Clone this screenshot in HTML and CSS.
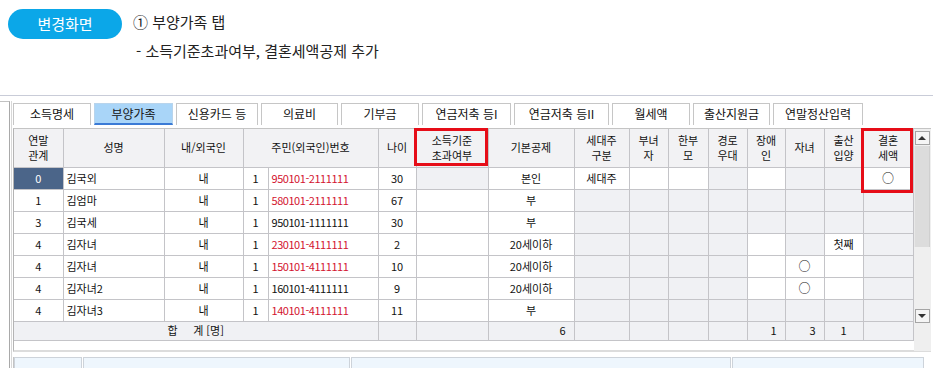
FILE: index.html
```html
<!DOCTYPE html>
<html lang="ko">
<head>
    <meta charset="UTF-8">
    <title>부양가족</title>
    <link rel="stylesheet" href="styles.css">
</head>
<body>
<div class="top">
    <span class="pill">변경화면</span>
    <div class="notes">
        <p class="title">① 부양가족 탭</p>
        <p class="sub">- 소득기준초과여부, 결혼세액공제 추가</p>
    </div>
</div>

<div class="frame">
    <div class="stub"></div>
    <div class="panel">
        <ul class="tabs">
            <li style="width:78px">소득명세</li>
            <li class="on" style="width:79px">부양가족</li>
            <li style="width:82px">신용카드 등</li>
            <li style="width:77px">의료비</li>
            <li style="width:78px">기부금</li>
            <li style="width:89px">연금저축 등I</li>
            <li style="width:95px">연금저축 등II</li>
            <li style="width:78px">월세액</li>
            <li style="width:77px">출산지원금</li>
            <li style="width:90px">연말정산입력</li>
        </ul>

        <div class="gridwrap">
            <table class="grid">
                <colgroup>
                    <col style="width:49px"><col style="width:101px"><col style="width:79px">
                    <col style="width:25px"><col style="width:110px"><col style="width:38px">
                    <col style="width:72px"><col style="width:86px"><col style="width:55px">
                    <col style="width:39px"><col style="width:40px"><col style="width:39px">
                    <col style="width:38px"><col style="width:39px"><col style="width:39px">
                    <col style="width:50px">
                </colgroup>
                <thead>
                <tr>
                    <th>연말<br>관계</th>
                    <th>성명</th>
                    <th>내/외국인</th>
                    <th colspan="2">주민(외국인)번호</th>
                    <th>나이</th>
                    <th>소득기준<br>초과여부</th>
                    <th>기본공제</th>
                    <th>세대주<br>구분</th>
                    <th>부녀<br>자</th>
                    <th>한부<br>모</th>
                    <th>경로<br>우대</th>
                    <th>장애<br>인</th>
                    <th>자녀</th>
                    <th>출산<br>입양</th>
                    <th>결혼<br>세액</th>
                </tr>
                </thead>
                <tbody>
                <tr>
                    <td class="c sel">0</td><td>김국외</td><td class="c">내</td><td class="c">1</td>
                    <td class="num red">950101-2111111</td><td class="c">30</td><td class="g"></td>
                    <td class="c">본인</td><td class="c">세대주</td><td></td><td></td><td class="g"></td>
                    <td></td><td class="g"></td><td class="g"></td><td class="c o">○</td>
                </tr>
                <tr>
                    <td class="c">1</td><td>김엄마</td><td class="c">내</td><td class="c">1</td>
                    <td class="num red">580101-2111111</td><td class="c">67</td><td></td>
                    <td class="c">부</td><td class="g"></td><td class="g"></td><td class="g"></td><td class="g"></td>
                    <td class="g"></td><td class="g"></td><td class="g"></td><td class="g"></td>
                </tr>
                <tr>
                    <td class="c">3</td><td>김국세</td><td class="c">내</td><td class="c">1</td>
                    <td class="num">950101-1111111</td><td class="c">30</td><td></td>
                    <td class="c">부</td><td class="g"></td><td class="g"></td><td class="g"></td><td class="g"></td>
                    <td class="g"></td><td class="g"></td><td class="g"></td><td class="g"></td>
                </tr>
                <tr>
                    <td class="c">4</td><td>김자녀</td><td class="c">내</td><td class="c">1</td>
                    <td class="num red">230101-4111111</td><td class="c">2</td><td></td>
                    <td class="c">20세이하</td><td class="g"></td><td class="g"></td><td class="g"></td><td class="g"></td>
                    <td></td><td class="g"></td><td class="c">첫째</td><td class="g"></td>
                </tr>
                <tr>
                    <td class="c">4</td><td>김자녀</td><td class="c">내</td><td class="c">1</td>
                    <td class="num red">150101-4111111</td><td class="c">10</td><td></td>
                    <td class="c">20세이하</td><td class="g"></td><td class="g"></td><td class="g"></td><td class="g"></td>
                    <td></td><td class="c o">○</td><td></td><td class="g"></td>
                </tr>
                <tr>
                    <td class="c">4</td><td>김자녀2</td><td class="c">내</td><td class="c">1</td>
                    <td class="num">160101-4111111</td><td class="c">9</td><td></td>
                    <td class="c">20세이하</td><td class="g"></td><td class="g"></td><td class="g"></td><td class="g"></td>
                    <td></td><td class="c o">○</td><td></td><td class="g"></td>
                </tr>
                <tr>
                    <td class="c">4</td><td>김자녀3</td><td class="c">내</td><td class="c">1</td>
                    <td class="num red">140101-4111111</td><td class="c">11</td><td></td>
                    <td class="c">부</td><td class="g"></td><td class="g"></td><td class="g"></td><td class="g"></td>
                    <td class="g"></td><td class="g"></td><td class="g"></td><td class="g"></td>
                </tr>
                <tr class="sum">
                    <td colspan="5" class="c">합&nbsp;&nbsp;&nbsp;&nbsp;&nbsp;계 [명]</td>
                    <td></td><td></td><td class="r">6</td><td></td><td></td><td></td><td></td>
                    <td class="r">1</td><td class="r">3</td><td class="c">1</td><td></td>
                </tr>
                </tbody>
            </table>

            <div class="scroll">
                <div class="sb-btn"><span class="up"></span></div>
                <div class="sb-thumb"></div>
                <div class="sb-fill"></div>
                <div class="sb-btn"><span class="down"></span></div>
                <div class="sb-end"></div>
            </div>

            <div class="mark mark-a"></div>
            <div class="mark mark-b"></div>
        </div>

        <div class="bottom">
            <div style="width:68px"></div>
            <div style="width:267px"></div>
            <div style="width:380px"></div>
            <div style="width:192px"></div>
        </div>
    </div>
</div>
</body>
</html>
```

FILE: styles.css
```css
* {
    margin: 0;
    padding: 0;
    box-sizing: border-box;
}

body {
    background: #fff;
    font-family: "Noto Sans CJK KR", "Noto Sans", sans-serif;
    color: #222;
    width: 933px;
    height: 368px;
    overflow: hidden;
}

.top {
    height: 95px;
    display: flex;
    padding: 9px 0 0 8px;
}

.pill {
    width: 114px;
    height: 30px;
    border-radius: 15px;
    background: #0ba7e8;
    color: #fff;
    font-size: 15px;
    line-height: 30px;
    text-align: center;
}

.notes {
    margin-left: 11px;
    color: #222;
    font-size: 15px;
}

.notes .title {
    line-height: 24px;
    margin-top: 1px;
}

.notes .sub {
    margin-top: 7px;
    margin-left: 3px;
    line-height: 20px;
}

.frame {
    border-top: 1px solid #c9ccd8;
    display: flex;
    height: 273px;
}

.stub {
    width: 10px;
    margin-top: 5px;
    border-top: 1px solid #c2c2c2;
    border-right: 1px solid #a9a9a9;
}

.panel {
    margin-left: 1px;
    margin-top: 5px;
    border-left: 1px solid #d8d8d8;
    padding: 2px 0 0 1px;
    flex: 1;
}

.tabs {
    list-style: none;
    display: flex;
    gap: 3px;
    height: 22px;
}

.tabs li {
    height: 22px;
    border: 1px solid #c6c6c6;
    border-bottom: none;
    background: #fff;
    font-size: 12px;
    line-height: 20px;
    text-align: center;
    color: #111;
}

.tabs li.on {
    background: #a9d5f8;
    border-color: #b8d4ec;
    border-bottom: 2px solid #3b7bd6;
    line-height: 19px;
}

.gridwrap {
    position: relative;
    margin-top: 3px;
    width: 918px;
    height: 224px;
    display: flex;
    border-left: 1px solid #b4b4b4;
    border-top: 1px solid #c4c4c4;
    border-bottom: 2px solid #dcdcdc;
}

.grid {
    width: 899px;
    table-layout: fixed;
    border-collapse: collapse;
    font-size: 11px;
    align-self: flex-start;
}

.grid th,
.grid td {
    border: 1px solid #c4c4c8;
    overflow: hidden;
    white-space: nowrap;
    font-weight: normal;
}

.grid tr:first-child th {
    border-top: none;
}

.grid tr th:first-child,
.grid tr td:first-child {
    border-left: none;
}

.grid th {
    background: #f2f2f4;
    height: 38px;
    line-height: 15px;
    text-align: center;
    color: #111;
}

.grid td {
    height: 22px;
    line-height: 20px;
    padding: 0 3px;
    background: #fff;
    color: #111;
}

.grid td.c {
    text-align: center;
}

.grid td.o {
    font-size: 12px;
}

.grid td.r {
    text-align: right;
    padding-right: 8px;
}

.grid td.g {
    background: #f0f1f4;
}

.grid td.num {
    letter-spacing: -0.45px;
}

.grid td.red {
    color: #d3132f;
}

.grid td.sel {
    background: #4b6589;
    color: #fff;
}

.grid tr.sum td {
    height: 19px;
    line-height: 17px;
    background: #f0f1f4;
}

.scroll {
    width: 18px;
    height: 222px;
    background: #efefef;
    display: flex;
    flex-direction: column;
    align-items: center;
    padding-top: 2px;
}

.sb-btn {
    width: 15px;
    height: 14px;
    border: 1px solid #a5a5a5;
    background: #f5f5f5;
    display: flex;
    align-items: center;
    justify-content: center;
}

.sb-btn span {
    width: 0;
    height: 0;
    border-left: 4px solid transparent;
    border-right: 4px solid transparent;
}

.sb-btn .up {
    border-bottom: 4px solid #333;
}

.sb-btn .down {
    border-top: 4px solid #333;
}

.sb-thumb {
    width: 16px;
    height: 101px;
    margin-top: 1px;
    background: #dcdcdc;
    border-left: 1px solid #e8e8e8;
    border-right: 1px solid #cfcfcf;
}

.sb-fill {
    flex: 1;
}

.sb-end {
    height: 28px;
}

.mark {
    position: absolute;
    border: 3px solid #e60d18;
}

.mark-a {
    left: 400px;
    top: -1px;
    width: 74px;
    height: 38px;
}

.mark-b {
    left: 847px;
    top: -1px;
    width: 52px;
    height: 65px;
}

.bottom {
    margin-top: 5px;
    display: flex;
    gap: 1px;
    height: 20px;
    border-left: 1px solid #c4c4c4;
}

.bottom div {
    background: #eef6fd;
    border: 1px solid #cdd3da;
}
```
